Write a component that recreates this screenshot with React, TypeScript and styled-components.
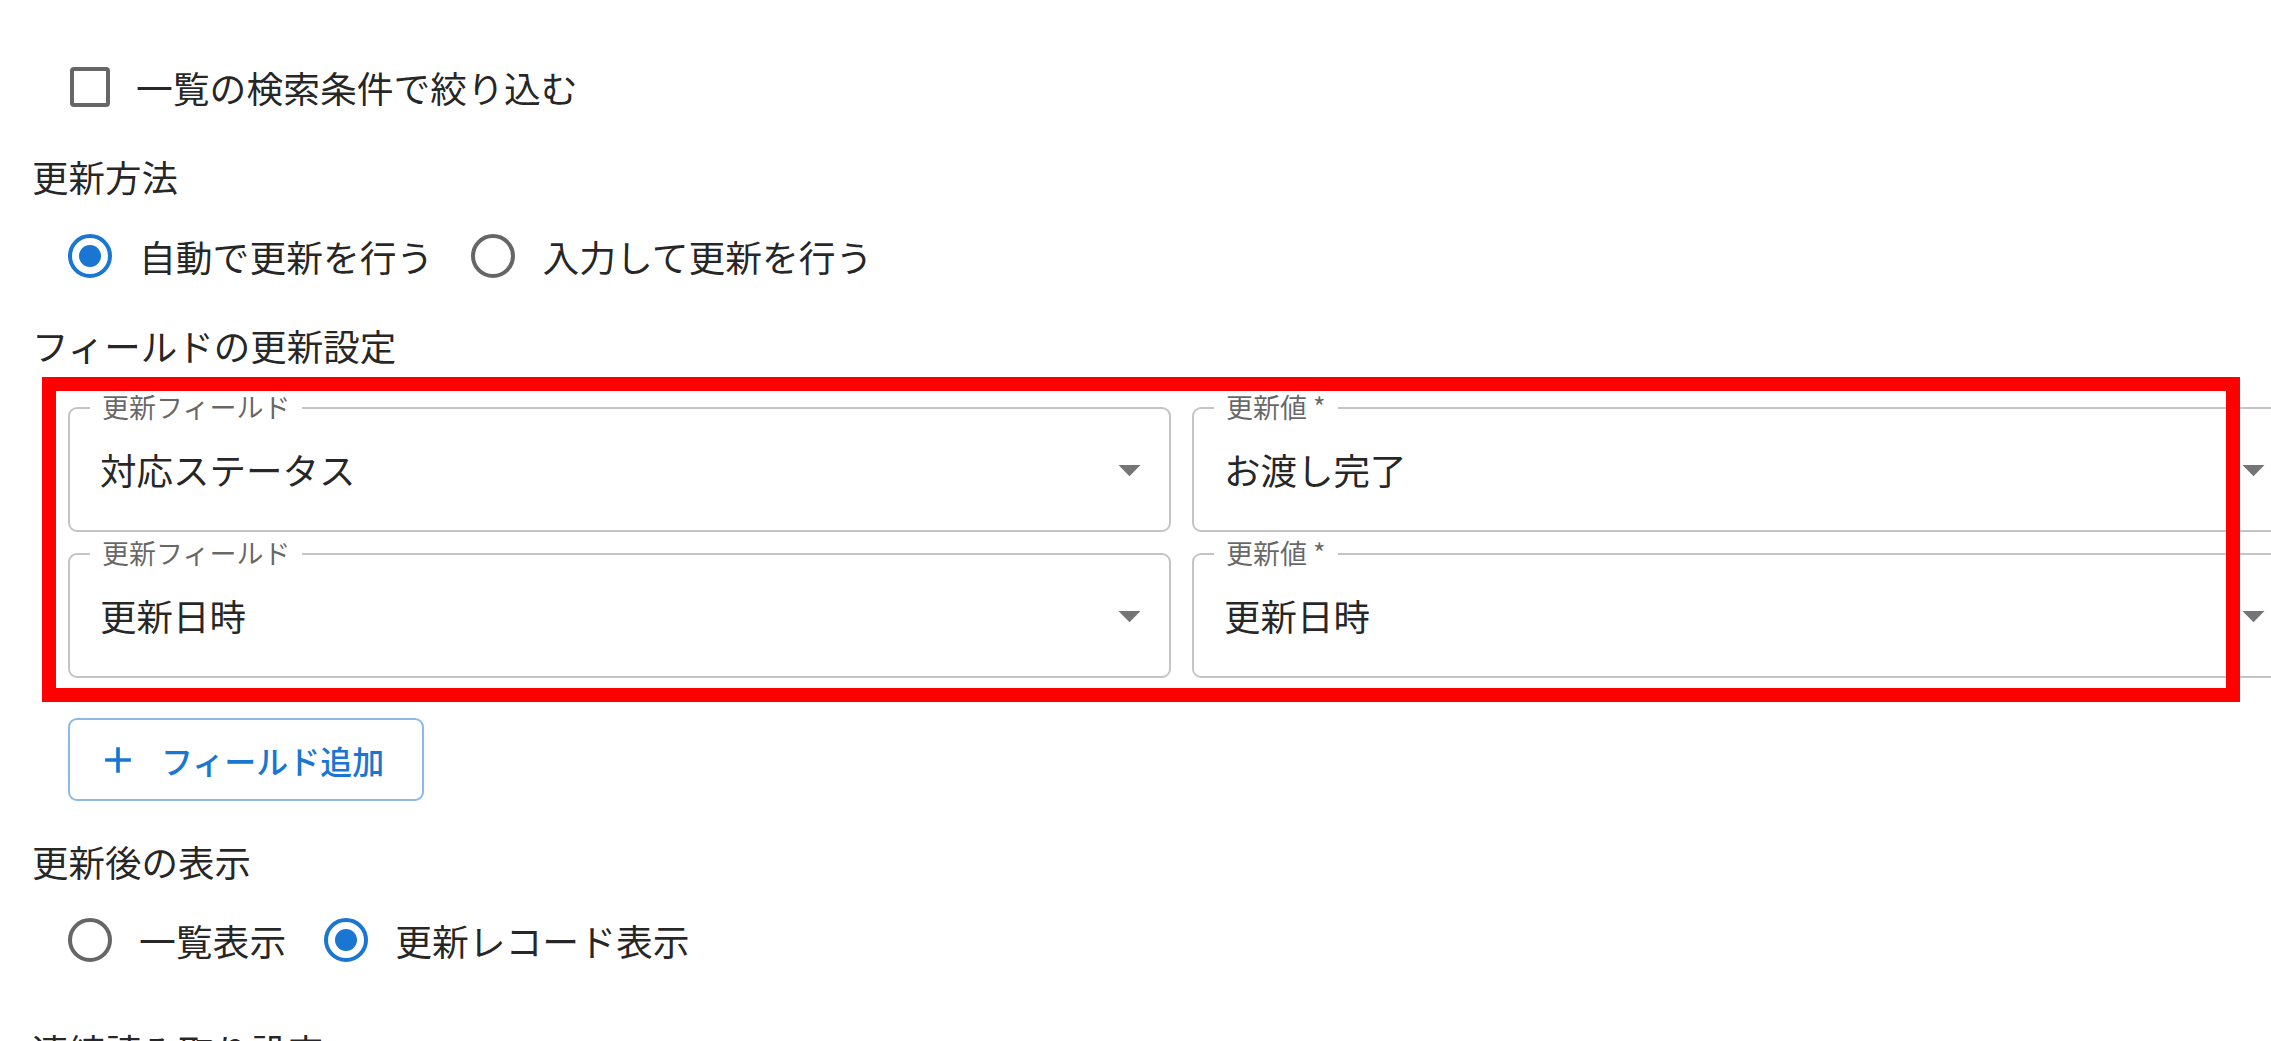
import React from "react";
import styled, { createGlobalStyle } from "styled-components";

const GlobalStyle = createGlobalStyle`
  html, body {
    margin: 0;
    padding: 0;
    overflow: hidden;
    background: #fff;
  }
  body {
    font-family: "Noto Sans CJK JP", "Noto Sans", sans-serif;
    color: rgba(0, 0, 0, 0.87);
  }
`;

// ページ全体
const Page = styled.div`
  display: flex;
  flex-direction: column;
  align-items: flex-start;
  width: 2400px;
  padding: 62px 0 0 32px;
`;

// セクション見出し
const Heading = styled.div<{ $top: number }>`
  margin-top: ${(p) => p.$top}px;
  font-size: 36.5px;
  line-height: 50px;
  height: 50px;
  white-space: nowrap;
`;

// チェックボックス / ラジオの行
const OptionRow = styled.div<{ $top: number }>`
  display: flex;
  align-items: center;
  height: 50px;
  margin: ${(p) => p.$top}px 0 0 36px;
`;

const Option = styled.label<{ $gap: number }>`
  display: flex;
  align-items: center;
  gap: ${(p) => p.$gap}px;
  margin-right: 38px;
  font-size: 36.8px;
  line-height: 50px;
  white-space: nowrap;
`;

const CheckBox = styled.span`
  width: 40px;
  height: 40px;
  margin-left: 2px;
  box-sizing: border-box;
  border: 4.4px solid #666;
  border-radius: 4px;
`;

const Radio = styled.span<{ $checked?: boolean }>`
  width: 44px;
  height: 44px;
  box-sizing: border-box;
  border-radius: 50%;
  border: 4.4px solid ${(p) => (p.$checked ? "#1976d2" : "#666")};
  display: flex;
  align-items: center;
  justify-content: center;

  &::after {
    content: "";
    display: ${(p) => (p.$checked ? "block" : "none")};
    width: 22px;
    height: 22px;
    border-radius: 50%;
    background: #1976d2;
  }
`;

// フィールド更新設定のグリッド
const Fields = styled.div`
  position: relative;
  display: grid;
  grid-template-columns: 1103px 1103px;
  column-gap: 21px;
  row-gap: 21px;
  margin: 36px 0 0 36px;
`;

// 赤枠（注釈）
const Highlight = styled.div`
  position: absolute;
  left: -26px;
  top: -30px;
  width: 2198px;
  height: 325px;
  box-sizing: border-box;
  border: 14px solid #ff0000;
  pointer-events: none;
  z-index: 2;
`;

const SelectBox = styled.div`
  position: relative;
  height: 125px;
  box-sizing: border-box;
  border: 2px solid rgba(0, 0, 0, 0.23);
  border-radius: 9px;
  display: flex;
  align-items: center;
  padding: 0 13px 0 30px;
`;

const SelectLabel = styled.span`
  position: absolute;
  top: -16px;
  left: 20px;
  padding: 0 12px;
  background: #fff;
  font-size: 27px;
  line-height: 27px;
  color: rgba(0, 0, 0, 0.6);
  white-space: nowrap;
`;

const SelectValue = styled.span`
  flex: 1;
  font-size: 36.5px;
  line-height: 50px;
  white-space: nowrap;
`;

const AddButton = styled.button`
  margin: 40px 0 0 36px;
  width: 356px;
  height: 83px;
  box-sizing: border-box;
  border: 2px solid rgba(25, 118, 210, 0.5);
  border-radius: 9px;
  background: #fff;
  color: #1976d2;
  display: flex;
  align-items: center;
  gap: 21px;
  padding: 0 0 0 26px;
  font-family: inherit;
  font-size: 32px;
  font-weight: 500;
  white-space: nowrap;
`;

const ArrowDown = () => (
  <svg width="53" height="53" viewBox="0 0 24 24">
    <path d="M7 10l5 5 5-5z" fill="rgba(0,0,0,0.54)" />
  </svg>
);

const PlusIcon = () => (
  <svg width="44" height="44" viewBox="0 0 24 24">
    <path d="M19 13h-6v6h-2v-6H5v-2h6V5h2v6h6z" fill="#1976d2" />
  </svg>
);

const rows = [
  { field: "対応ステータス", value: "お渡し完了" },
  { field: "更新日時", value: "更新日時" },
];

function App() {
  return (
    <>
      <GlobalStyle />
      <Page>
        <OptionRow $top={0}>
          <Option $gap={26}>
            <CheckBox />
            一覧の検索条件で絞り込む
          </Option>
        </OptionRow>

        <Heading $top={40}>更新方法</Heading>
        <OptionRow $top={29}>
          <Option $gap={27}>
            <Radio $checked />
            自動で更新を行う
          </Option>
          <Option $gap={27}>
            <Radio />
            入力して更新を行う
          </Option>
        </OptionRow>

        <Heading $top={40}>フィールドの更新設定</Heading>
        <Fields>
          {rows.map((row) => (
            <React.Fragment key={row.field}>
              <SelectBox>
                <SelectLabel>更新フィールド</SelectLabel>
                <SelectValue>{row.field}</SelectValue>
                <ArrowDown />
              </SelectBox>
              <SelectBox>
                <SelectLabel>更新値 *</SelectLabel>
                <SelectValue>{row.value}</SelectValue>
                <ArrowDown />
              </SelectBox>
            </React.Fragment>
          ))}
          <Highlight />
        </Fields>

        <AddButton>
          <PlusIcon />
          フィールド追加
        </AddButton>

        <Heading $top={36}>更新後の表示</Heading>
        <OptionRow $top={28}>
          <Option $gap={27}>
            <Radio />
            一覧表示
          </Option>
          <Option $gap={27}>
            <Radio $checked />
            更新レコード表示
          </Option>
        </OptionRow>

        <Heading $top={61}>連続読み取り設定</Heading>
      </Page>
    </>
  );
}

export default App;
